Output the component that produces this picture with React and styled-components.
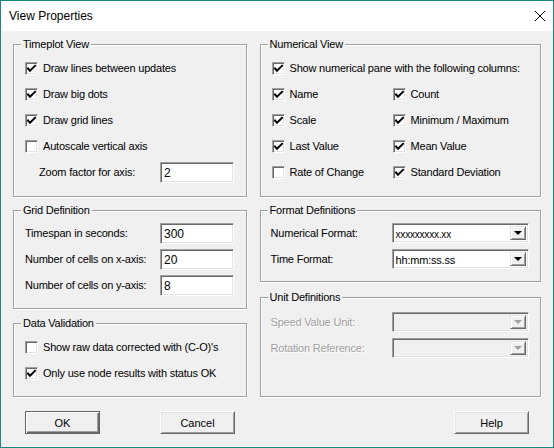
import React from "react";
import styled, { createGlobalStyle } from "styled-components";

const GlobalStyle = createGlobalStyle`
  html, body {
    margin: 0;
    padding: 0;
    background: #f0f0f0;
  }
  body {
    font-family: "Liberation Sans", Arial, sans-serif;
    font-size: 11px;
    color: #000;
  }
`;

const Window = styled.div`
  width: 554px;
  height: 448px;
  box-sizing: border-box;
  border: 1px solid #17897f;
  background: #f0f0f0;
  display: flex;
  flex-direction: column;
`;

const TitleBar = styled.div`
  height: 30px;
  background: #fff;
  display: flex;
  align-items: center;
  justify-content: space-between;
  padding: 0 7px 0 8px;
`;

const Title = styled.span`
  font-family: "Liberation Sans", Arial, sans-serif;
  font-size: 12px;
  padding-bottom: 1px;
`;

const CloseButton = styled.div`
  width: 12px;
  height: 12px;
  display: flex;
  svg {
    display: block;
  }
`;

const Body = styled.div`
  display: flex;
  gap: 13px;
  padding: 13px 12px 0 12px;
`;

const Column = styled.div`
  display: flex;
  flex-direction: column;
  width: ${({ $width }) => $width}px;
`;

const Group = styled.div`
  position: relative;
  box-sizing: border-box;
  height: ${({ $height }) => $height}px;
  margin-top: ${({ $top }) => $top || 0}px;
  border: 1px solid #a0a0a0;
  box-shadow: inset 1px 1px 0 #fff, 1px 1px 0 #fff;
  padding: ${({ $padTop }) => $padTop}px 0 0 ${({ $padLeft }) => $padLeft}px;
`;

const Legend = styled.span`
  position: absolute;
  top: -8px;
  left: 7px;
  padding: 0 2px;
  background: #f0f0f0;
  line-height: 14px;
  letter-spacing: -0.2px;
`;

const Row = styled.div`
  height: 26px;
  display: flex;
  align-items: center;
  padding-left: ${({ $indent }) => $indent || 0}px;
`;

const CheckGrid = styled.div`
  display: grid;
  grid-template-columns: 121px auto;
`;

const Box = styled.span`
  width: 13px;
  height: 13px;
  box-sizing: border-box;
  flex: none;
  background: #fff;
  border: 1px solid;
  border-color: #a0a0a0 #fff #fff #a0a0a0;
  box-shadow: inset 1px 1px 0 #696969, inset -1px -1px 0 #e3e3e3;
  margin-right: 5px;
  display: flex;
  svg {
    display: block;
  }
`;

const Label = styled.span`
  width: ${({ $width }) => ($width ? `${$width}px` : "auto")};
  flex: none;
  white-space: nowrap;
  letter-spacing: -0.2px;
  color: ${({ $disabled }) => ($disabled ? "#a0a0a0" : "#000")};
  text-shadow: ${({ $disabled }) => ($disabled ? "1px 1px 0 #fff" : "none")};
`;

const TextBox = styled.div`
  width: 74px;
  height: 21px;
  box-sizing: border-box;
  background: #fff;
  border: 1px solid;
  border-color: #a0a0a0 #fff #fff #a0a0a0;
  box-shadow: inset 1px 1px 0 #696969, inset -1px -1px 0 #e3e3e3;
  padding: 3px 0 0 3px;
  font-size: 12px;
  line-height: 14px;
`;

const Combo = styled.div`
  width: 137px;
  height: 20px;
  box-sizing: border-box;
  background: ${({ $disabled }) => ($disabled ? "#f0f0f0" : "#fff")};
  border: 1px solid;
  border-color: #a0a0a0 #fff #fff #a0a0a0;
  box-shadow: inset 1px 1px 0 #696969, inset -1px -1px 0 #e3e3e3;
  display: flex;
  align-items: center;
  justify-content: space-between;
  padding: 0 2px 0 3px;
`;

const ComboText = styled.span`
  font-size: ${({ $small }) => ($small ? 10 : 11)}px;
  letter-spacing: -0.2px;
  padding-top: 2px;
`;

const DropButton = styled.span`
  width: 16px;
  height: 14px;
  box-sizing: border-box;
  background: #f0f0f0;
  border: 1px solid;
  border-color: #e3e3e3 #696969 #696969 #e3e3e3;
  box-shadow: inset 1px 1px 0 #fff, inset -1px -1px 0 #a0a0a0;
  display: flex;
  align-items: center;
  justify-content: center;
  &::after {
    content: "";
    border-left: 4px solid transparent;
    border-right: 4px solid transparent;
    border-top: 4px solid ${({ $disabled }) => ($disabled ? "#a0a0a0" : "#000")};
  }
`;

const Footer = styled.div`
  display: flex;
  align-items: flex-start;
  padding: 14px 24px 0 24px;
`;

const Button = styled.button`
  width: 75px;
  height: 23px;
  box-sizing: border-box;
  margin-left: ${({ $gap }) => ($gap === "auto" ? "auto" : `${$gap || 0}px`)};
  font-family: "Liberation Sans", Arial, sans-serif;
  font-size: 11px;
  color: #000;
  background: #f0f0f0;
  padding: 0;
  border: 1px solid;
  border-color: ${({ $default }) =>
    $default ? "#646464" : "#fff #696969 #696969 #fff"};
  box-shadow: ${({ $default }) =>
    $default
      ? "inset 1px 1px 0 #fff, inset -1px -1px 0 #696969, inset -2px -2px 0 #a0a0a0"
      : "inset 1px 1px 0 #e3e3e3, inset -1px -1px 0 #a0a0a0"};
`;

const Check = () => (
  <svg width="11" height="11" viewBox="0 0 11 11">
    <polyline
      points="1.5,4.5 3.5,6.8 8.5,1.8"
      fill="none"
      stroke="#000"
      strokeWidth="2"
      strokeLinecap="square"
      transform="translate(0.5,1)"
    />
  </svg>
);

const CheckItem = ({ checked, children }) => (
  <Row>
    <Box>{checked && <Check />}</Box>
    <Label>{children}</Label>
  </Row>
);

const Field = ({ label, value, width = 135, indent }) => (
  <Row $indent={indent}>
    <Label $width={width}>{label}</Label>
    <TextBox>{value}</TextBox>
  </Row>
);

const ComboField = ({ label, value, small, disabled }) => (
  <Row>
    <Label $width={121} $disabled={disabled}>
      {label}
    </Label>
    <Combo $disabled={disabled}>
      <ComboText $small={small}>{value}</ComboText>
      <DropButton $disabled={disabled} />
    </Combo>
  </Row>
);

export default function App() {
  return (
    <>
      <GlobalStyle />
      <Window>
        <TitleBar>
          <Title>View Properties</Title>
          <CloseButton>
            <svg width="12" height="12" viewBox="0 0 12 12">
              <path d="M1 1 L11 11 M11 1 L1 11" stroke="#000" strokeWidth="1" />
            </svg>
          </CloseButton>
        </TitleBar>
        <Body>
          <Column $width={234}>
            <Group $height={153} $padTop={10} $padLeft={11}>
              <Legend>Timeplot View</Legend>
              <CheckItem checked>Draw lines between updates</CheckItem>
              <CheckItem checked>Draw big dots</CheckItem>
              <CheckItem checked>Draw grid lines</CheckItem>
              <CheckItem>Autoscale vertical axis</CheckItem>
              <Field label="Zoom factor for axis:" value="2" indent={14} width={121} />
            </Group>
            <Group $height={99} $top={13} $padTop={9} $padLeft={11}>
              <Legend>Grid Definition</Legend>
              <Field label="Timespan in seconds:" value="300" />
              <Field label="Number of cells on x-axis:" value="20" />
              <Field label="Number of cells on y-axis:" value="8" />
            </Group>
            <Group $height={74} $top={14} $padTop={10} $padLeft={11}>
              <Legend>Data Validation</Legend>
              <CheckItem>Show raw data corrected with (C-O)'s</CheckItem>
              <CheckItem checked>Only use node results with status OK</CheckItem>
            </Group>
          </Column>
          <Column $width={282}>
            <Group $height={153} $padTop={10} $padLeft={11}>
              <Legend>Numerical View</Legend>
              <CheckItem checked>Show numerical pane with the following columns:</CheckItem>
              <CheckGrid>
                <CheckItem checked>Name</CheckItem>
                <CheckItem checked>Count</CheckItem>
                <CheckItem checked>Scale</CheckItem>
                <CheckItem checked>Minimum / Maximum</CheckItem>
                <CheckItem checked>Last Value</CheckItem>
                <CheckItem checked>Mean Value</CheckItem>
                <CheckItem>Rate of Change</CheckItem>
                <CheckItem checked>Standard Deviation</CheckItem>
              </CheckGrid>
            </Group>
            <Group $height={72} $top={13} $padTop={9} $padLeft={10}>
              <Legend>Format Definitions</Legend>
              <ComboField label="Numerical Format:" value="xxxxxxxxx.xx" small />
              <ComboField label="Time Format:" value="hh:mm:ss.ss" />
            </Group>
            <Group $height={100} $top={15} $padTop={11} $padLeft={10}>
              <Legend>Unit Definitions</Legend>
              <ComboField label="Speed Value Unit:" disabled />
              <ComboField label="Rotation Reference:" disabled />
            </Group>
          </Column>
        </Body>
        <Footer>
          <Button $default>OK</Button>
          <Button $gap={60}>Cancel</Button>
          <Button $gap="auto">Help</Button>
        </Footer>
      </Window>
    </>
  );
}
